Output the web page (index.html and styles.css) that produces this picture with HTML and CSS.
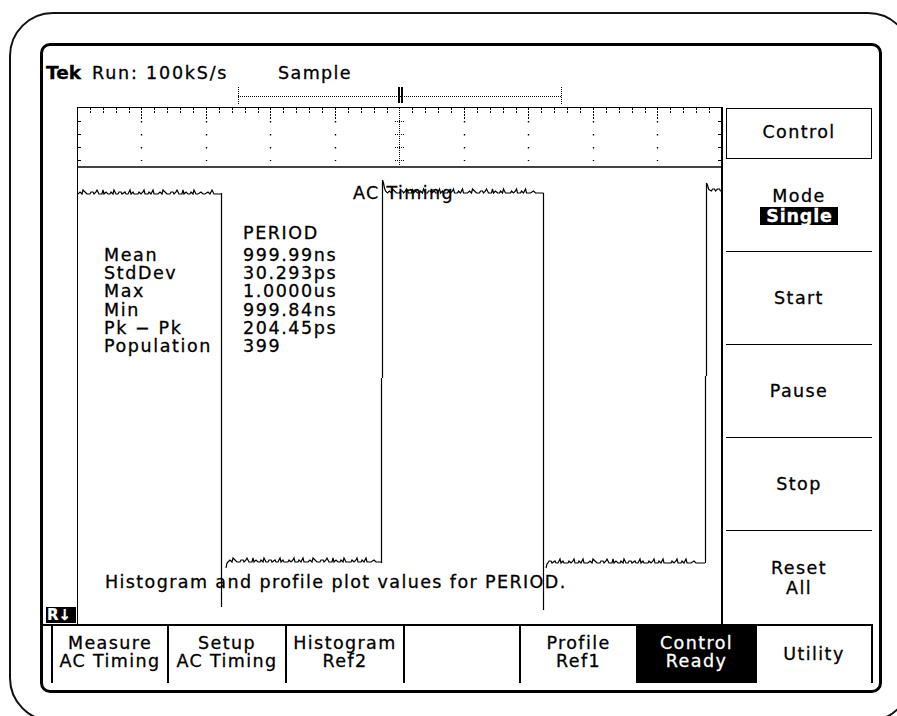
FILE: index.html
```html
<!DOCTYPE html>
<html>
<head>
<meta charset="utf-8">
<title>Tek AC Timing</title>
<link rel="stylesheet" href="styles.css">
</head>
<body>
<div class="bezel">
  <div class="screen">
    <div class="header">
      <span class="tek">Tek</span><span class="run">Run: 100kS/s</span><span class="acq">Sample</span>
    </div>
    <div class="trig">
      <svg class="trig-svg" width="836" height="21" viewBox="43 86 836 21">
        <path d="M238 96.5H562" stroke="#000" stroke-width="1" stroke-dasharray="1 1" fill="none"/>
        <path d="M238.5 87V104M561.5 87V104" stroke="#000" stroke-width="1" stroke-dasharray="1 1" fill="none"/>
        <rect x="398" y="87" width="2" height="16" fill="#000"/>
        <rect x="401" y="87" width="2" height="16" fill="#000"/>
      </svg>
    </div>
    <div class="main">
      <div class="gutter"><span class="rbadge">R↓</span></div>
      <div class="display">
        <div class="grat">
          <svg class="grat-svg" width="643" height="58" viewBox="78 108 643 58">
            <path stroke="#000" stroke-width="1" stroke-dasharray="2 1" fill="none"
              d="M90.5 108v5M103.5 108v5M116.5 108v5M129.5 108v5M154.5 108v5M167.5 108v5M180.5 108v5M193.5 108v5M219.5 108v5M232.5 108v5M245.5 108v5M258.5 108v5M283.5 108v5M296.5 108v5M309.5 108v5M322.5 108v5M348.5 108v5M361.5 108v5M374.5 108v5M387.5 108v5M412.5 108v5M425.5 108v5M438.5 108v5M451.5 108v5M477.5 108v5M490.5 108v5M503.5 108v5M516.5 108v5M541.5 108v5M554.5 108v5M567.5 108v5M580.5 108v5M606.5 108v5M619.5 108v5M632.5 108v5M645.5 108v5M670.5 108v5M683.5 108v5M696.5 108v5M709.5 108v5"/>
            <path stroke="#000" stroke-width="1" stroke-dasharray="2 1" fill="none"
              d="M141.5 108v11M206.5 108v11M270.5 108v11M335.5 108v11M464.5 108v11M528.5 108v11M593.5 108v11M657.5 108v11"/>
            <path stroke="#000" stroke-width="1.4" stroke-dasharray="1.4 11.6" fill="none"
              d="M141.5 121v40M206.5 121v40M270.5 121v40M335.5 121v40M464.5 121v40M528.5 121v40M593.5 121v40M657.5 121v40"/>
            <path stroke="#000" stroke-width="1" stroke-dasharray="1 1" fill="none"
              d="M399.5 108v58M395 121.5h9M395 134.5h9M395 147.5h9M395 160.5h9"/>
            <path stroke="#000" stroke-width="1" fill="none"
              d="M78 121.5h3M78 134.5h3M78 147.5h3M78 160.5h3M718 121.5h3M718 134.5h3M718 147.5h3M718 160.5h3"/>
          </svg>
        </div>
        <div class="wave">
          <div class="title">AC Timing</div>
          <div class="stats">
            <span></span><span class="hd">PERIOD</span>
            <span>Mean</span><span>999.99ns</span>
            <span>StdDev</span><span>30.293ps</span>
            <span>Max</span><span>1.0000us</span>
            <span>Min</span><span>999.84ns</span>
            <span>Pk − Pk</span><span>204.45ps</span>
            <span>Population</span><span>399</span>
          </div>
          <div class="note">Histogram and profile plot values for PERIOD.</div>
          <svg class="trace" width="643" height="456" viewBox="78 168 643 456">
            <path fill="none" stroke="#000" stroke-width="1.2" stroke-linejoin="miter"
              d="M78 194
                 l2 -2l2 2l1 -4l2 2l2 2l3 0l1 -2l2 0l1 2l2 -2l1 -2l2 4l3 0l1 -4l1 4l2 -2l2 2l2 0l1 -2l2 2l1 -4l2 4l2 0
                 l1 -2l2 0l1 2l3 -2l1 2l2 0l2 -4l1 4l2 -2l1 2l4 0l1 -2l2 2l2 -2l1 -2l1 4l3 0l1 -2l2 2l2 -4l1 4l2 0l2 0
                 l2 -2l2 2l1 -4l2 2l2 2l3 0l1 -2l2 0l1 2l2 -2l1 -2l2 4l3 0l1 -4l1 4l2 -2l2 2l2 0l1 -2l2 2l1 -4l2 4l2 0
                 l3 -2l2 2l2 0l3 -2l2 2l2 -4l2 4l2 0l3 0l2 0
                 M221.5 193V607
                 M226 568l1 -5l1 -1
                 l2 -2l2 2l1 -4l2 2l2 2l3 0l1 -2l2 0l1 2l2 -2l1 -2l2 4l3 0l1 -4l1 4l2 -2l2 2l2 0l1 -2l2 2l1 -4l2 4l2 0
                 l1 -2l2 0l1 2l3 -2l1 2l2 0l2 -4l1 4l2 -2l1 2l4 0l1 -2l2 2l2 -2l1 -2l1 4l3 0l1 -2l2 2l2 -4l1 4l2 0l2 0
                 l2 -2l2 2l1 -4l2 2l2 2l3 0l1 -2l2 0l1 2l2 -2l1 -2l2 4l3 0l1 -4l1 4l2 -2l2 2l2 0l1 -2l2 2l1 -4l2 4l2 0
                 l3 0l1 -2l2 2l2 -2l1 -2l1 4l3 0l1 -2l2 2l2 -4l1 4l2 0l2 0l3 -2l2 2l2 0l3 0
                 M381.5 563V378M382.5 378V180
                 l1 3l1 5l1 3l2 2
                 l2 -2l2 2l1 -4l2 2l2 2l3 0l1 -2l2 0l1 2l2 -2l1 -2l2 4l3 0l1 -4l1 4l2 -2l2 2l2 0l1 -2l2 2l1 -4l2 4l2 0
                 l1 -2l2 0l1 2l3 -2l1 2l2 0l2 -4l1 4l2 -2l1 2l4 0l1 -2l2 2l2 -2l1 -2l1 4l3 0l1 -2l2 2l2 -4l1 4l2 0l2 0
                 l2 -2l2 2l1 -4l2 2l2 2l3 0l1 -2l2 0l1 2l2 -2l1 -2l2 4l3 0l1 -4l1 4l2 -2l2 2l2 0l1 -2l2 2l1 -4l2 4l2 0
                 l3 0l1 -2l2 2l2 -2l1 -2l1 4l3 0l1 -2l2 2l2 -4l1 4l2 0l2 0l3 -2l2 2l2 0l3 0l3 0
                 M543.5 193V610
                 M546 568l1 -4l1 -1
                 l1 -2l2 0l1 2l3 -2l1 2l2 0l2 -4l1 4l2 -2l1 2l4 0l1 -2l2 2l2 -2l1 -2l1 4l3 0l1 -2l2 2l2 -4l1 4l2 0l2 0
                 l2 -2l2 2l1 -4l2 2l2 2l3 0l1 -2l2 0l1 2l2 -2l1 -2l2 4l3 0l1 -4l1 4l2 -2l2 2l2 0l1 -2l2 2l1 -4l2 4l2 0
                 l1 -2l2 0l1 2l3 -2l1 2l2 0l2 -4l1 4l2 -2l1 2l4 0l1 -2l2 2l2 -2l1 -2l1 4l3 0l1 -2l2 2l2 -4l1 4l2 0l2 0
                 l3 0l1 -2l2 2l2 -2l1 -2l1 4l3 0l1 -2l2 2l2 -4l1 4l2 0l2 0l3 -2l2 2l2 0l3 0l4 0
                 M705.5 563V376M706.5 376V183
                 l1 2l1 4l1 1l2 1l1 -2l2 0l1 2l2 -2l2 0l1 2l2 0"/>
          </svg>
        </div>
      </div>
      <div class="menu">
        <div class="menu-title">Control</div>
        <div class="mitem"><span>Mode</span><span class="sel">Single</span></div>
        <div class="mitem"><span>Start</span></div>
        <div class="mitem"><span>Pause</span></div>
        <div class="mitem"><span>Stop</span></div>
        <div class="mitem last"><span>Reset</span><span>All</span></div>
      </div>
    </div>
    <div class="keys">
      <div class="key two"><span>Measure</span><span>AC Timing</span></div>
      <div class="key two"><span>Setup</span><span>AC Timing</span></div>
      <div class="key two"><span>Histogram</span><span>Ref2</span></div>
      <div class="key"></div>
      <div class="key two"><span>Profile</span><span>Ref1</span></div>
      <div class="key two on"><span>Control</span><span>Ready</span></div>
      <div class="key last"><span>Utility</span></div>
    </div>
  </div>
</div>
</body>
</html>
```

FILE: styles.css
```css
html, body {
  margin: 0;
  padding: 0;
  overflow: hidden;
  background: #fff;
}
body {
  width: 897px;
  height: 716px;
  font-family: "DejaVu Sans", "Liberation Sans", sans-serif;
  font-size: 17.5px;
  letter-spacing: 1.4px;
  color: #000;
  -webkit-text-stroke: 0.3px #000;
}
.bezel {
  box-sizing: border-box;
  margin: 12px 0 0 9px;
  width: 903px;
  height: 710px;
  border: 2px solid #111;
  border-radius: 44px;
  padding: 29px 0 0 29px;
}
.screen {
  box-sizing: border-box;
  width: 842px;
  height: 650px;
  border: 3px solid #000;
  border-radius: 10px;
  display: flex;
  flex-direction: column;
}
.header {
  box-sizing: border-box;
  height: 40px;
  padding: 17px 0 0 3px;
  display: flex;
  align-items: baseline;
  line-height: 20px;
}
.tek {
  width: 46px;
  font-weight: bold;
  font-size: 18.5px;
  letter-spacing: 0;
}
.run {
  width: 186px;
  letter-spacing: 1.8px;
}
.trig {
  height: 21px;
}
.trig-svg, .grat-svg {
  display: block;
}
.main {
  display: flex;
  height: 517px;
}
.gutter {
  width: 34px;
  display: flex;
  align-items: flex-end;
}
.rbadge {
  box-sizing: border-box;
  margin: 0 0 1px 3px;
  width: 30px;
  height: 16px;
  background: #000;
  color: #fff;
  -webkit-text-stroke: 0.2px #fff;
  font-weight: bold;
  font-size: 15px;
  line-height: 16px;
  letter-spacing: 0;
  padding-left: 1px;
  overflow: hidden;
  white-space: nowrap;
}
.display {
  box-sizing: border-box;
  width: 646px;
  border-top: 1px solid #000;
  border-left: 1px solid #000;
  border-right: 2px solid #000;
  display: flex;
  flex-direction: column;
}
.grat {
  box-sizing: border-box;
  height: 60px;
  border-bottom: 2px solid #444;
}
.wave {
  flex: 1;
  position: relative;
  display: flex;
  flex-direction: column;
}
.title {
  padding: 16px 0 0 8px;
  line-height: 18px;
  text-align: center;
}
.stats {
  margin-top: 22px;
  padding-left: 26px;
  display: grid;
  grid-template-columns: 139px auto;
  line-height: 18.3px;
  justify-content: start;
  letter-spacing: 1.6px;
}
.stats .hd {
  margin-bottom: 3.4px;
}
.note {
  margin-top: auto;
  margin-bottom: 33px;
  padding-left: 27px;
  line-height: 18px;
}
.trace {
  position: absolute;
  left: 0;
  top: 0;
  pointer-events: none;
}
.menu {
  box-sizing: border-box;
  width: 156px;
  padding: 1px 7px 0 3px;
  display: flex;
  flex-direction: column;
}
.menu-title {
  box-sizing: border-box;
  height: 51px;
  border: 1px solid #000;
  display: flex;
  align-items: center;
  justify-content: center;
  line-height: 18px;
  padding-bottom: 3px;
}
.mitem {
  box-sizing: border-box;
  height: 93px;
  border-bottom: 1px solid #000;
  display: flex;
  flex-direction: column;
  align-items: center;
  justify-content: center;
  line-height: 20px;
}
.mitem.last {
  border-bottom: none;
}
.sel {
  margin-top: 1px;
  background: #000;
  color: #fff;
  -webkit-text-stroke: 0.3px #fff;
  font-weight: bold;
  letter-spacing: 0.8px;
  line-height: 18px;
  padding: 0 5px 0 6px;
}
.keys {
  box-sizing: border-box;
  width: 830px;
  height: 59px;
  border-top: 2px solid #000;
  padding-left: 8px;
  display: grid;
  grid-template-columns: 116px 118px 118px 116px 117px 119px 118px;
}
.key {
  border-left: 2px solid #000;
  display: flex;
  flex-direction: column;
  align-items: center;
  justify-content: center;
  text-align: center;
  line-height: 18.5px;
  padding-bottom: 5px;
}
.key.last {
  border-right: 2px solid #000;
  padding-bottom: 0;
}
.key.on {
  background: #000;
  color: #fff;
  -webkit-text-stroke: 0.3px #fff;
}
```
